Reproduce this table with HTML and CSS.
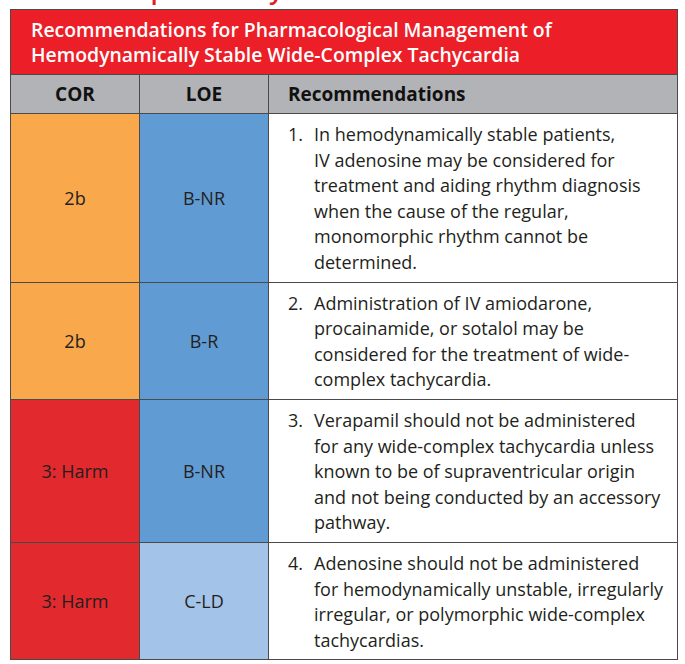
FILE: index.html
```html
<!DOCTYPE html>
<html lang="en">
<head>
<meta charset="utf-8">
<title>Recommendations for Pharmacological Management of Hemodynamically Stable Wide-Complex Tachycardia</title>
<link rel="stylesheet" href="styles.css">
</head>
<body>
<div class="page">
  <div class="kicker"><span class="kicker-text">Wide-Complex Tachycardia</span></div>
  <div class="table">
    <div class="title">Recommendations for Pharmacological Management of<br>Hemodynamically Stable Wide-Complex Tachycardia</div>
    <div class="grid">
      <div class="th">COR</div>
      <div class="th">LOE</div>
      <div class="th th-rec">Recommendations</div>

      <div class="cell cor-2b">2b</div>
      <div class="cell loe-b">B-NR</div>
      <div class="rec"><span class="num">1.</span><span class="txt">In hemodynamically stable patients,<br>IV adenosine may be considered for<br>treatment and aiding rhythm diagnosis<br>when the cause of the regular,<br>monomorphic rhythm cannot be<br>determined.</span></div>

      <div class="cell cor-2b">2b</div>
      <div class="cell loe-b">B-R</div>
      <div class="rec"><span class="num">2.</span><span class="txt">Administration of IV amiodarone,<br>procainamide, or sotalol may be<br>considered for the treatment of wide-<br>complex tachycardia.</span></div>

      <div class="cell cor-3">3: Harm</div>
      <div class="cell loe-b">B-NR</div>
      <div class="rec"><span class="num">3.</span><span class="txt">Verapamil should not be administered<br>for any wide-complex tachycardia unless<br>known to be of supraventricular origin<br>and not being conducted by an accessory<br>pathway.</span></div>

      <div class="cell cor-3">3: Harm</div>
      <div class="cell loe-c">C-LD</div>
      <div class="rec"><span class="num">4.</span><span class="txt">Adenosine should not be administered<br>for hemodynamically unstable, irregularly<br>irregular, or polymorphic wide-complex<br>tachycardias.</span></div>
    </div>
  </div>
</div>
</body>
</html>
```

FILE: styles.css
```css
html, body {
  margin: 0;
  padding: 0;
  background: #ffffff;
}

body {
  font-family: "Open Sans", "Noto Sans", sans-serif;
  color: #231f20;
}

.page {
  width: 685px;
  height: 664px;
  overflow: hidden;
}

.kicker {
  height: 9px;
  overflow: hidden;
  padding-left: 22px;
}

.kicker-text {
  display: block;
  margin-top: -26px;
  font-size: 26px;
  line-height: 30px;
  font-weight: 600;
  color: #e21d25;
  white-space: nowrap;
}

.table {
  margin-left: 10px;
  width: 666px;
  border: 1px solid #4a4a4a;
  background: #4a4a4a;
}

.title {
  background: #ec1e27;
  color: #ffffff;
  font-weight: 600;
  font-size: 19.4px;
  line-height: 24.5px;
  padding: 8px 10px 7px 20px;
  margin-bottom: 1px;
  white-space: nowrap;
}

.grid {
  display: grid;
  grid-template-columns: 128px 128px 1fr;
  gap: 1px;
}

.th {
  background: #b1b3b6;
  color: #111111;
  font-weight: 700;
  font-size: 19px;
  height: 38px;
  display: flex;
  align-items: center;
  justify-content: center;
}

.th-rec {
  justify-content: flex-start;
  padding-left: 19px;
}

.cell {
  display: flex;
  align-items: center;
  justify-content: center;
  font-size: 18px;
  color: #231f20;
}

.cor-2b { background: #f9a84b; }
.cor-3 { background: #e2292d; }
.loe-b { background: #619bd3; }
.loe-c { background: #a4c3e8; }

.rec {
  background: #ffffff;
  display: flex;
  font-size: 18px;
  line-height: 25.6px;
  padding: 8px 2px 6px 19px;
  white-space: nowrap;
}

.num {
  flex: 0 0 26px;
}

.txt {
  flex: 1 1 auto;
}
```
